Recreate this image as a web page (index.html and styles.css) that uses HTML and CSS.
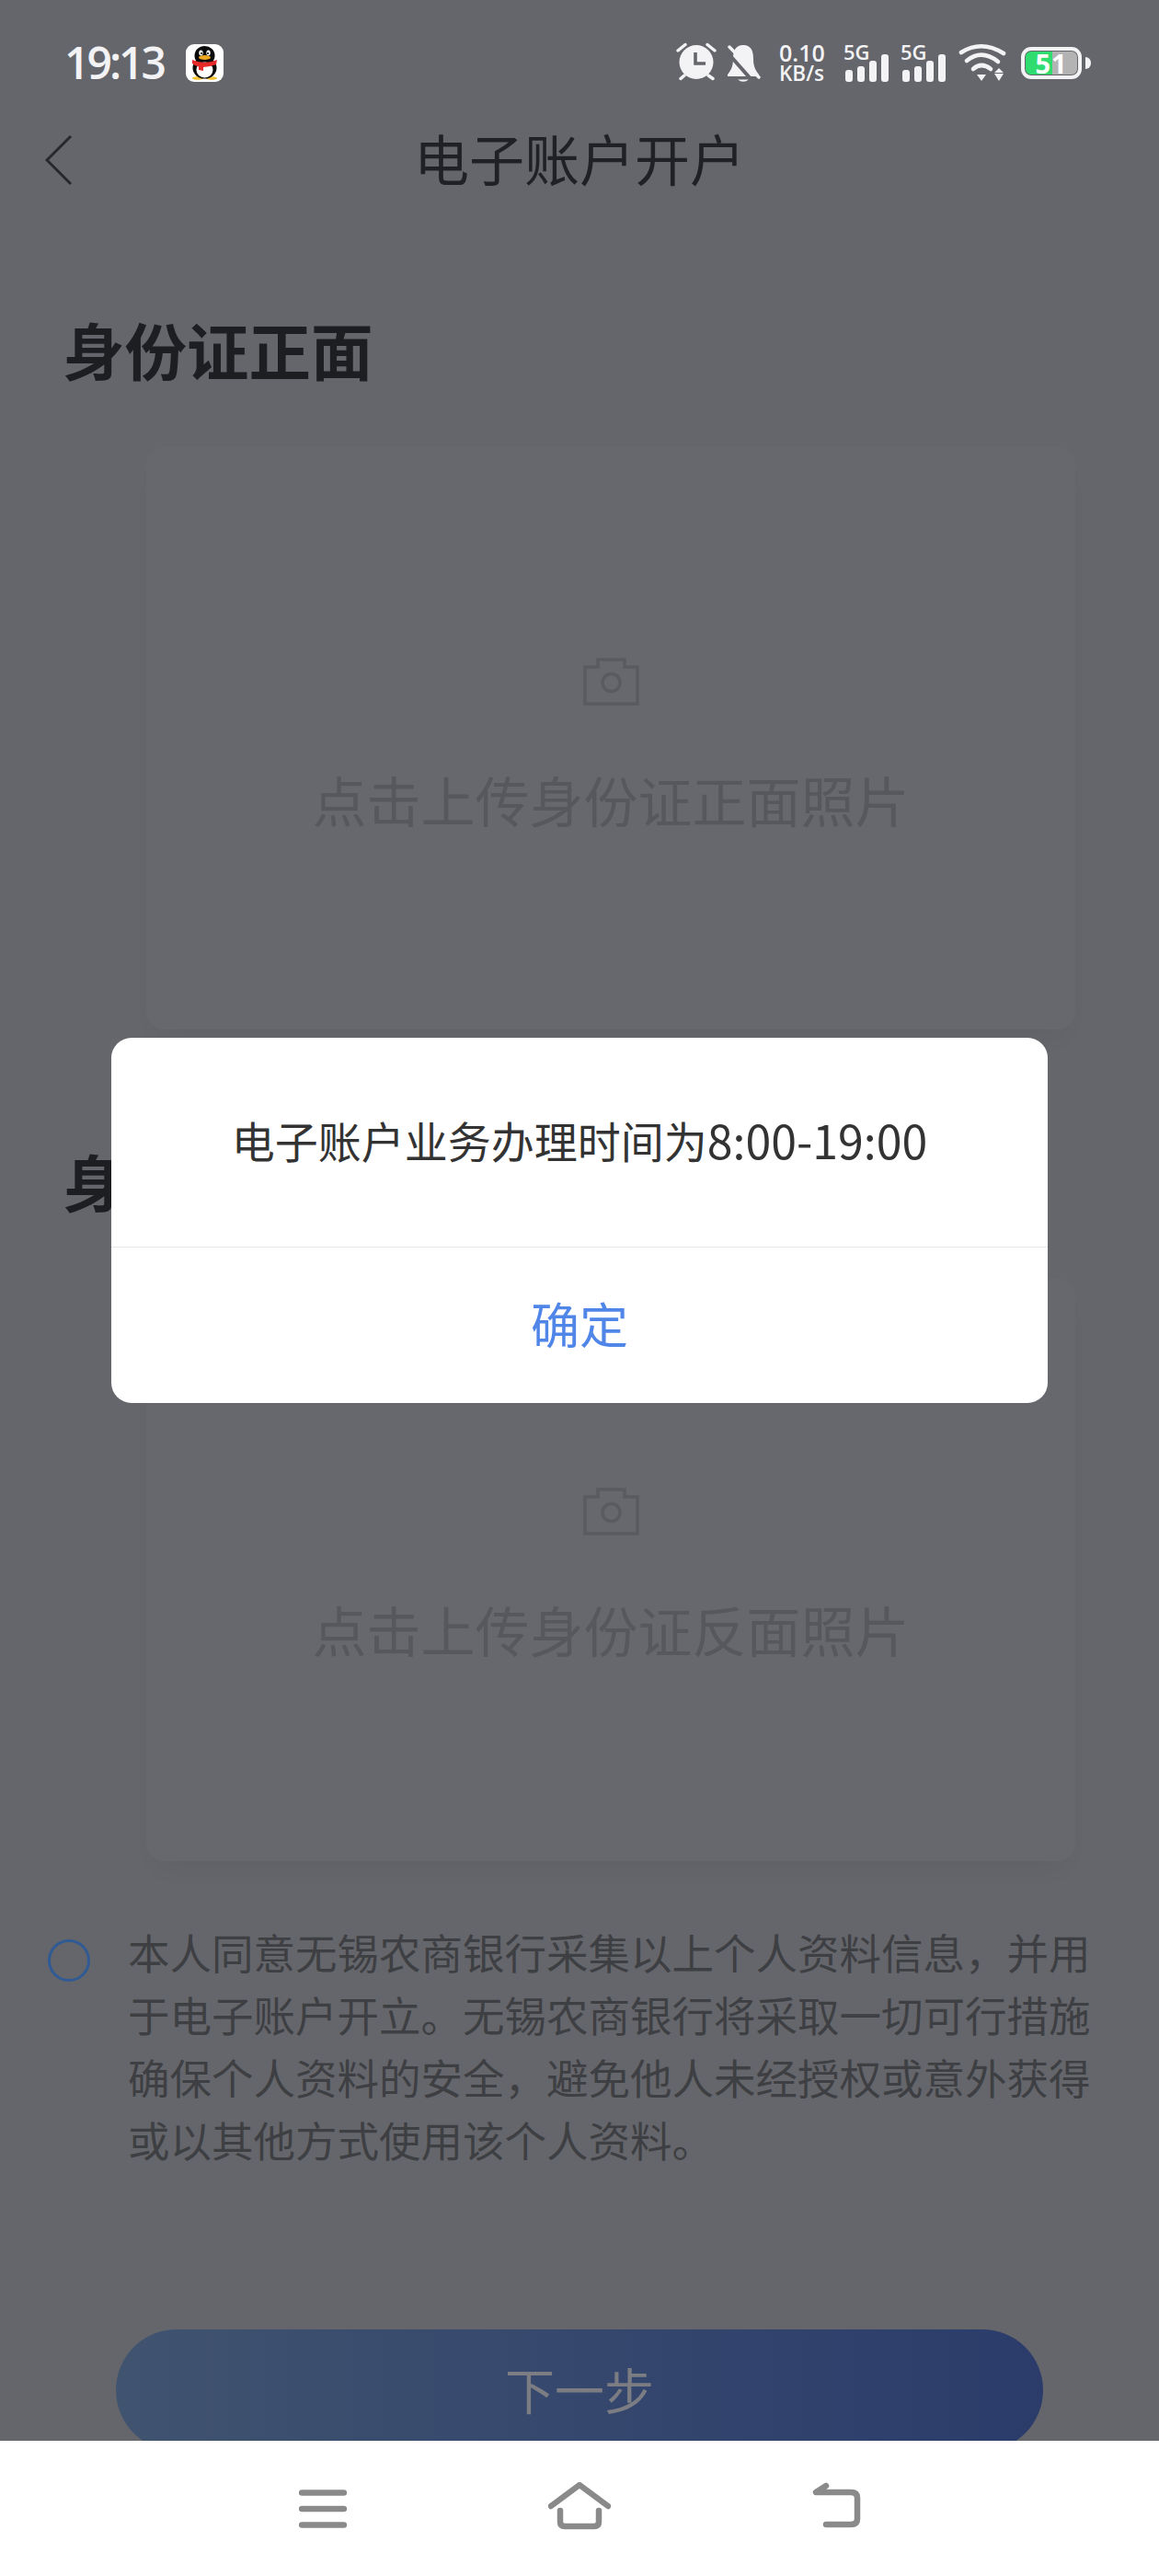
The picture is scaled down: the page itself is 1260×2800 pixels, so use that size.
FILE: index.html
```html
<!DOCTYPE html>
<html lang="zh-CN">
<head>
<meta charset="utf-8">
<title>电子账户开户</title>
<link rel="stylesheet" href="styles.css">
</head>
<body>
<div class="screen">
  <main class="page">
    <header class="status">
      <span class="time">19:13</span>
      <svg class="qq" viewBox="0 0 41 41" width="41" height="41">
        <rect width="41" height="41" rx="9" fill="#fff"/>
        <ellipse cx="13" cy="37" rx="6" ry="1.8" fill="#f2c230"/>
        <ellipse cx="28" cy="37" rx="6" ry="1.8" fill="#f2c230"/>
        <ellipse cx="20.5" cy="26" rx="13" ry="11.5" fill="#0a0a0a"/>
        <ellipse cx="20.5" cy="12.5" rx="11" ry="10.5" fill="#0a0a0a"/>
        <ellipse cx="20.5" cy="28" rx="9" ry="8.5" fill="#fff"/>
        <path d="M7 17Q20.5 23 34 17L33 22Q26 25 19 25V29L14 28V24.5Q9 23 7 21Z" fill="#e62a2a"/>
        <ellipse cx="20.5" cy="14.5" rx="6.5" ry="2.6" fill="#efa91f"/>
        <ellipse cx="16.5" cy="9.5" rx="2.2" ry="3" fill="#fff"/>
        <ellipse cx="24.5" cy="9.5" rx="2.2" ry="3" fill="#fff"/>
        <circle cx="17" cy="10" r="1.1" fill="#0a0a0a"/>
        <circle cx="24" cy="10" r="1.1" fill="#0a0a0a"/>
      </svg>
      <span class="status-gap"></span>
      <svg class="ico" viewBox="0 0 44 44" width="44" height="44">
        <circle cx="22" cy="21.5" r="18.5" fill="#f3f3f5"/>
        <g class="ln-white" stroke-width="3.4"><path d="M2 9L10 2.5M34 2.5L42 9M5 39.5L9 36M35 36L40 39.5"/></g>
        <path class="ln-bg" stroke-width="3.6" d="M21 11V23H32"/>
      </svg>
      <svg class="ico m-bell" viewBox="0 0 38 44" width="38" height="44">
        <path d="M19 3C10 3 8 10 8 18C8 27 5 31 2 35V37H36V35C33 31 30 27 30 18C30 10 28 3 19 3Z" fill="#f3f3f5"/>
        <path d="M13 40.5Q19 45 25 40.5Z" fill="#f3f3f5"/>
        <path class="ln-bg" stroke-width="4" d="M0 9L30 43"/>
        <path class="ln-white" stroke-width="3.4" d="M4 5L36 38"/>
      </svg>
      <div class="speed"><span class="speed-val">0.10</span><span class="speed-unit">KB/s</span></div>
      <div class="signal m-sig1">
        <span class="sig-text">5G</span>
        <svg class="sig-bars" viewBox="0 0 50 42" width="50" height="42">
          <rect x="2" y="29" width="8" height="13" rx="3"/>
          <rect x="15" y="25" width="8" height="17" rx="3"/>
          <rect x="28" y="19" width="8" height="23" rx="3"/>
          <rect x="41" y="12" width="8" height="30" rx="3"/>
        </svg>
      </div>
      <div class="signal m-sig2">
        <span class="sig-text">5G</span>
        <svg class="sig-bars" viewBox="0 0 50 42" width="50" height="42">
          <rect x="2" y="29" width="8" height="13" rx="3"/>
          <rect x="15" y="25" width="8" height="17" rx="3"/>
          <rect x="28" y="19" width="8" height="23" rx="3"/>
          <rect x="41" y="12" width="8" height="30" rx="3"/>
        </svg>
      </div>
      <svg class="ico m-wifi" viewBox="0 0 52 42" width="52" height="42">
        <g class="ln-white" stroke-width="4.6">
          <path d="M3 10Q25 -4 49 11"/>
          <path d="M9 19Q25 6 43 20"/>
          <path d="M16 28Q25 20 35 28"/>
        </g>
        <path d="M20 34H30L25 41Z M39 33H49L44 41Z M39 32H49L44 27Z" fill="#f3f3f5"/>
      </svg>
      <div class="battery"><span class="batt-num">51</span></div>
      <span class="batt-tip"></span>
    </header>

    <nav class="titlebar">
      <svg class="back" viewBox="0 0 30 56" width="30" height="56"><path d="M28 2L2 28L28 54"/></svg>
      <h1 class="title">电子账户开户</h1>
    </nav>

    <h2 class="section first">身份证正面</h2>
    <section class="card">
      <svg class="camera" viewBox="0 0 61 53" width="61" height="53">
        <path d="M2 51V11H16V3H45V11H59V51Z"/>
        <circle cx="30.5" cy="28" r="9.5"/>
      </svg>
      <p class="card-text">点击上传身份证正面照片</p>
    </section>

    <h2 class="section">身份证反面</h2>
    <section class="card second">
      <svg class="camera" viewBox="0 0 61 53" width="61" height="53">
        <path d="M2 51V11H16V3H45V11H59V51Z"/>
        <circle cx="30.5" cy="28" r="9.5"/>
      </svg>
      <p class="card-text">点击上传身份证反面照片</p>
    </section>

    <div class="agree">
      <span class="radio"></span>
      <p class="agree-text">本人同意无锡农商银行采集以上个人资料信息，并用于电子账户开立。无锡农商银行将采取一切可行措施确保个人资料的安全，避免他人未经授权或意外获得或以其他方式使用该个人资料。</p>
    </div>

    <button class="next">下一步</button>

    <div class="overlay">
      <div class="dialog">
        <p class="dialog-msg">电子账户业务办理时间为<span class="dialog-time">8:00-19:00</span></p>
        <div class="dialog-ok">确定</div>
      </div>
    </div>
  </main>

  <footer class="navbar">
    <svg class="nav-ico" viewBox="0 0 52 52" width="52" height="52">
      <path d="M3 11.5H49M3 29H49M3 46.5H49"/>
    </svg>
    <svg class="nav-ico" viewBox="0 0 68 52" width="68" height="52">
      <path d="M3 26L34 3L65 26"/>
      <path d="M13 31V43Q13 48 18 48H50Q55 48 55 43V31"/>
    </svg>
    <svg class="nav-ico" viewBox="0 0 53 52" width="53" height="52">
      <path d="M15 4L4 11H42Q49 11 49 17V40Q49 46 42 46H15"/>
    </svg>
  </footer>
</div>
</body>
</html>
```

FILE: styles.css
```css
* { box-sizing: border-box; }
html, body { margin: 0; padding: 0; }
body {
  width: 1260px;
  height: 2800px;
  overflow: hidden;
  font-family: "Noto Sans CJK SC", "Noto Sans", sans-serif;
  background: #fff;
}
.screen { display: flex; flex-direction: column; height: 2800px; }

.page {
  position: relative;
  height: 2653px;
  overflow: hidden;
  background: #65666b;
}

/* status bar */
.status {
  display: flex;
  align-items: center;
  height: 136px;
  padding: 0 74px 0 70px;
}
.time {
  font-family: "Open Sans", sans-serif;
  font-size: 48px;
  font-weight: 600;
  color: #f3f3f5;
  line-height: 1;
  letter-spacing: -3px;
}
.qq { margin-left: 24px; flex: none; }
.status-gap { flex: 1; }
.ico { flex: none; display: block; }
.ln-white { fill: none; stroke: #f3f3f5; stroke-linecap: round; }
.ln-bg { fill: none; stroke: #65666b; }
.m-bell { margin-left: 10px; }
.speed {
  display: flex;
  flex-direction: column;
  gap: 1px;
  width: 49px;
  margin-left: 20px;
  font-family: "Open Sans", sans-serif;
  font-weight: 600;
  color: #f3f3f5;
}
.speed-val { font-size: 25px; line-height: 23px; white-space: nowrap; }
.speed-unit { font-size: 22.5px; line-height: 20px; white-space: nowrap; }
.signal {
  display: grid;
  flex: none;
  width: 50px;
  height: 42px;
}
.sig-text, .sig-bars { grid-area: 1 / 1; }
.sig-text {
  font-family: "Open Sans", sans-serif;
  font-size: 22px;
  font-weight: 600;
  line-height: 18px;
  height: 18px;
  color: #f3f3f5;
}
.sig-bars { display: block; fill: #f3f3f5; }
.m-sig1 { margin-left: 21px; }
.m-sig2 { margin-left: 12px; }
.m-wifi { margin-left: 13px; }
.battery {
  display: flex;
  align-items: center;
  justify-content: center;
  margin-left: 16px;
  width: 66px;
  height: 35px;
  border: 4px solid #f3f3f5;
  border-radius: 11px;
  background: linear-gradient(90deg, #2fdc6f 0 52%, #b3b3b3 52% 100%);
  background-clip: padding-box;
  box-shadow: inset 0 0 0 1px #65666b;
}
.batt-num {
  font-family: "Open Sans", sans-serif;
  font-size: 29px;
  font-weight: 700;
  color: #fff;
  line-height: 1;
  letter-spacing: 1px;
}
.batt-tip {
  margin-left: 4px;
  width: 6px;
  height: 13px;
  border-radius: 0 6px 6px 0;
  background: #f3f3f5;
}

/* title bar */
.titlebar {
  display: grid;
  grid-template-columns: 1fr auto 1fr;
  align-items: center;
  height: 76px;
}
.back {
  margin-left: 49px;
  fill: none;
  stroke: #26282d;
  stroke-width: 3;
}
.title {
  margin: 0 0 6px;
  font-size: 60px;
  font-weight: 400;
  line-height: 70px;
  color: #1f2126;
}

/* sections */
.section {
  margin: 119px 0 62px 68px;
  font-size: 67.5px;
  font-weight: 700;
  line-height: 90px;
  color: #1d1e22;
}
.section.first { margin-top: 122px; }
.card {
  display: flex;
  flex-direction: column;
  align-items: center;
  width: 1010px;
  height: 633px;
  margin-left: 159px;
  padding-top: 228px;
  border-radius: 20px;
  background: #67686d;
  box-shadow: 0 18px 30px -14px rgba(0, 0, 0, 0.06);
}
.card.second { padding-top: 226px; }
.camera { fill: none; stroke: #5a5b60; stroke-width: 3.5; flex: none; }
.card-text {
  margin: 72px 0 0;
  font-size: 59px;
  line-height: 60px;
  color: #57585d;
}

/* agreement */
.agree {
  display: flex;
  align-items: flex-start;
  margin: 64px 0 0 52px;
}
.radio {
  flex: none;
  width: 46px;
  height: 46px;
  margin: 21px 41px 0 0;
  border: 3px solid #2f5a94;
  border-radius: 50%;
}
.agree-text {
  margin: 0;
  width: 1050px;
  font-size: 45.5px;
  line-height: 68px;
  color: #3e3f43;
}

/* button */
.next {
  display: block;
  width: 1008px;
  height: 132px;
  margin: 173px 0 0 126px;
  padding: 0 0 4px;
  border: 0;
  border-radius: 66px;
  background: linear-gradient(90deg, #40536f, #2b3c6b);
  font-family: inherit;
  font-size: 54px;
  color: #7b7d83;
}

/* dialog */
.overlay {
  position: absolute;
  inset: 0;
  display: flex;
  align-items: center;
  justify-content: center;
}
.dialog {
  width: 1018px;
  border-radius: 22px;
  background: #fff;
  overflow: hidden;
}
.dialog-msg {
  display: flex;
  align-items: center;
  justify-content: center;
  height: 228px;
  margin: 0;
  padding-bottom: 7px;
  font-size: 47px;
  color: #333;
  border-bottom: 1px solid #e6e6e6;
}
.dialog-time { font-size: 50px; }
.dialog-ok {
  display: flex;
  align-items: center;
  justify-content: center;
  height: 169px;
  padding-bottom: 6px;
  font-size: 53px;
  color: #5086e8;
}

/* system nav */
.navbar {
  flex: 1;
  display: flex;
  justify-content: center;
  gap: 219px;
  padding-top: 45px;
  background: #fff;
}
.nav-ico {
  flex: none;
  fill: none;
  stroke: #8a8a8a;
  stroke-width: 6.5;
  stroke-linecap: round;
  stroke-linejoin: round;
}
```
